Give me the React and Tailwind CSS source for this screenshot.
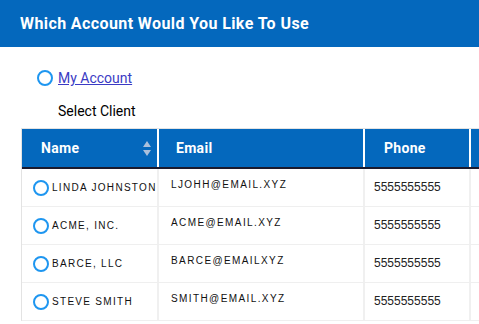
import React from 'react';

const clients = [
  { name: 'Linda Johnston', email: 'ljohh@email.xyz', phone: '5555555555' },
  { name: 'Acme, Inc.', email: 'acme@email.xyz', phone: '5555555555' },
  { name: 'Barce, LLC', email: 'barce@emailxyz', phone: '5555555555' },
  { name: 'Steve Smith', email: 'smith@email.xyz', phone: '5555555555' },
];

// Radio circle
const Radio = () => (
  <span className="block w-[16px] h-[16px] rounded-full border-2 border-[#1e96f0] bg-white shrink-0" />
);

const SortIcon = () => (
  <svg width="8" height="15" viewBox="0 0 8 15" className="shrink-0">
    <path d="M4 0 L8 6 L0 6 Z" fill="#aac0dc" />
    <path d="M4 15 L8 9 L0 9 Z" fill="#aac0dc" />
  </svg>
);

export default function App() {
  return (
    <div className="w-[479px] h-[324px] overflow-hidden bg-white" style={{ fontFamily: '"Liberation Sans", Arial, sans-serif' }}>
      <div className="h-[47px] bg-[#0468bd] flex items-center pl-[20px]">
        <h1 className="text-white font-bold text-[16px] tracking-[0.4px]" style={{ fontFamily: 'Roboto, "Liberation Sans", sans-serif' }}>
          Which Account Would You Like To Use
        </h1>
      </div>

      <div className="pl-[37px] pt-[23px] flex items-center gap-[5px]">
        <Radio />
        <a href="#" className="text-[#3b3bc4] underline text-[14px] leading-[16px]" style={{ fontFamily: 'Roboto, "Liberation Sans", sans-serif' }}>My Account</a>
      </div>
      <div className="pl-[58px] pt-[17px] text-[14px] leading-[16px] text-black" style={{ fontFamily: 'Roboto, "Liberation Sans", sans-serif' }}>
        Select Client
      </div>

      <div className="ml-[21px] mt-[9px] w-[600px] border-l border-t border-[#e3e3e3]">
        <div className="flex h-[40px] bg-[#0468bd] border-b-2 border-[#1a1a2e] text-white font-bold text-[14px] tracking-[0.3px]" style={{ fontFamily: 'Roboto, "Liberation Sans", sans-serif' }}>
          <div className="w-[137px] border-r-2 border-white flex items-center justify-between pl-[19px] pr-[6px]">
            <span>Name</span>
            <SortIcon />
          </div>
          <div className="w-[206px] border-r-2 border-white flex items-center pl-[17px]">Email</div>
          <div className="w-[106px] border-r-2 border-white flex items-center pl-[19px]">Phone</div>
          <div className="flex-1" />
        </div>

        {clients.map((c, i) => (
          <div key={i} className="flex h-[38px] border-b border-[#efefef]">
            <div className="w-[137px] border-r-2 border-[#f0f0f0] flex items-center gap-[3px] pl-[11px] pt-[1px]">
              <Radio />
              <span className="uppercase text-[10px] leading-[12px] tracking-[1.3px] text-[#111] whitespace-nowrap">{c.name}</span>
            </div>
            <div className="w-[206px] border-r-2 border-[#f0f0f0] pl-[12px] pt-[10px] text-[10px] leading-[12px]">
              <span className="uppercase tracking-[1.4px] text-[#111] whitespace-nowrap">{c.email}</span>
            </div>
            <div className="w-[106px] border-r-2 border-[#f0f0f0] pl-[9px] pt-[11px] text-[12px] leading-[14px] text-[#222]">
              {c.phone}
            </div>
            <div className="flex-1" />
          </div>
        ))}
      </div>
    </div>
  );
}
